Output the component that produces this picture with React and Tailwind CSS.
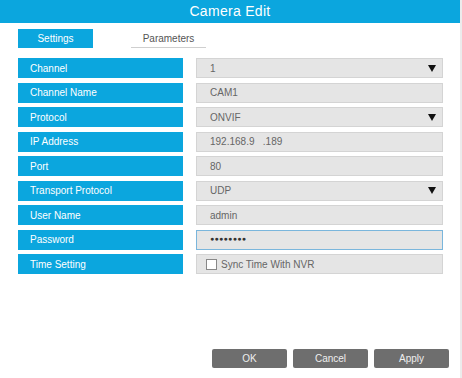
import React from "react";

const rows = [
  { label: "Channel", value: "1", type: "select" },
  { label: "Channel Name", value: "CAM1", type: "text" },
  { label: "Protocol", value: "ONVIF", type: "select" },
  { label: "IP Address", value: "192.168.9   .189", type: "text" },
  { label: "Port", value: "80", type: "text" },
  { label: "Transport Protocol", value: "UDP", type: "select" },
  { label: "User Name", value: "admin", type: "text" },
  { label: "Password", value: "●●●●●●●●", type: "password" },
  { label: "Time Setting", value: "Sync Time With NVR", type: "check" },
];

function Arrow() {
  return (
    <svg width="8" height="7" viewBox="0 0 8 7" className="shrink-0 mr-[2px]">
      <path d="M0 0 H8 L4 7 Z" fill="#111" />
    </svg>
  );
}

export default function App() {
  return (
    <div
      className="w-[462px] h-[378px] bg-white flex"
      style={{ fontFamily: '"Liberation Sans", Arial, sans-serif' }}
    >
      <div className="w-[460px] h-full flex flex-col relative">
        <div className="h-[23px] bg-[#0ba6de] flex items-center justify-center text-white text-[14px] tracking-[0.3px]">
          Camera Edit
        </div>
        <div className="flex pl-[18px] pt-[6px] items-end">
          <div className="w-[75px] h-[19px] bg-[#0ba6de] text-white text-[10px] flex items-center justify-center">
            Settings
          </div>
          <div className="ml-[38px] w-[75px] h-[19px] border-b border-[#cfcfcf] text-[#555] text-[10px] flex items-center justify-center">
            Parameters
          </div>
        </div>
        <div className="flex flex-col gap-[4.5px] pl-[18px] mt-[10px]">
          {rows.map((r) => (
            <div key={r.label} className="flex h-[20px]">
              <div className="w-[165px] bg-[#0ba6de] text-white text-[10px] flex items-center pl-[12px]">
                {r.label}
              </div>
              <div
                className={
                  "ml-[13px] w-[247px] bg-[#e5e5e5] border flex items-center text-[10px] text-[#666] " +
                  (r.type === "password" ? "border-[#7ab6dc]" : "border-[#d4d4d4]") +
                  (r.type === "check" ? " pl-[9px]" : " pl-[13px] pr-[4px]")
                }
              >
                {r.type === "check" ? (
                  <>
                    <span className="w-[11px] h-[11px] bg-white border border-[#888] mr-[4px]" />
                    <span>{r.value}</span>
                  </>
                ) : (
                  <>
                    <span
                      className={
                        "flex-1 whitespace-pre " +
                        (r.type === "password" ? "text-[#333] text-[7px] tracking-[0.3px]" : "")
                      }
                    >
                      {r.value}
                    </span>
                    {r.type === "select" && <Arrow />}
                  </>
                )}
              </div>
            </div>
          ))}
        </div>
        <div className="flex-1" />
        <div className="flex justify-end gap-[6px] pr-[11px] pb-[10px]">
          {["OK", "Cancel", "Apply"].map((b) => (
            <div
              key={b}
              className="w-[75px] h-[19px] bg-[#6e6e6e] rounded-[2px] text-[#eee] text-[10px] flex items-center justify-center"
            >
              {b}
            </div>
          ))}
        </div>
      </div>
      <div className="w-[2px] h-full bg-[#ececec]" />
    </div>
  );
}
